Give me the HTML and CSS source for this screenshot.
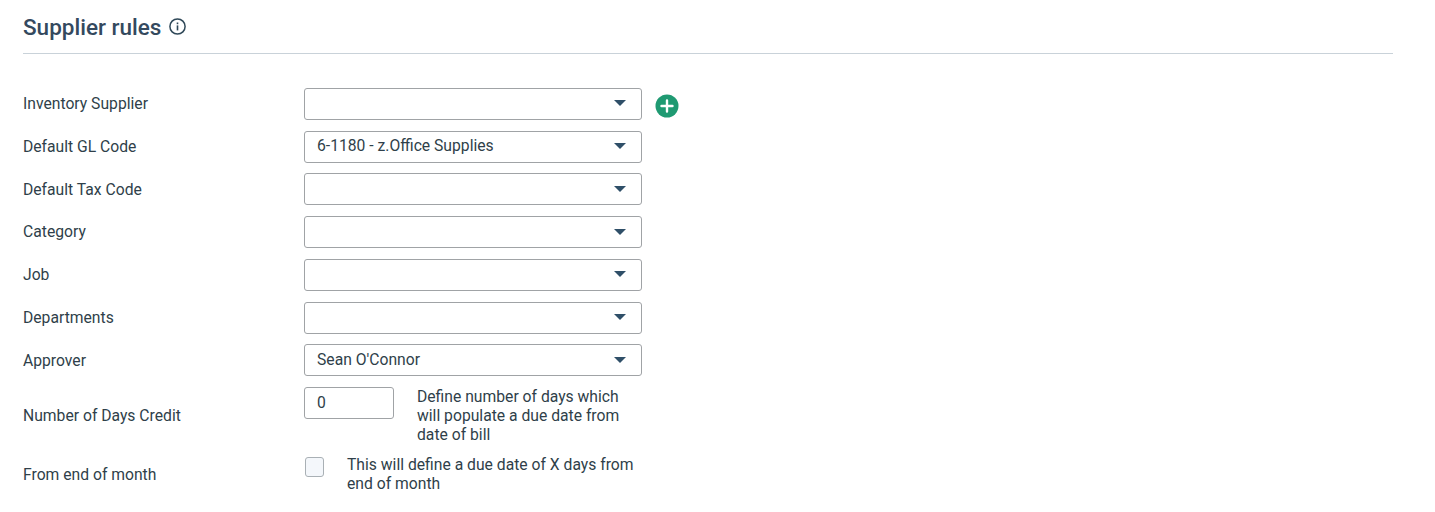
FILE: index.html
```html
<!DOCTYPE html>
<html lang="en">
<head>
<meta charset="utf-8">
<title>Supplier rules</title>
<link rel="stylesheet" href="styles.css">
</head>
<body>
<section class="panel">
  <header class="head">
    <h2 class="title">Supplier rules</h2>
    <svg class="info" width="17" height="17" viewBox="0 0 17 17" aria-hidden="true"><circle cx="8.5" cy="8.5" r="7.6" fill="none" stroke="#2f4858" stroke-width="1.5"/><rect x="7.7" y="7.4" width="1.6" height="5" fill="#2f4858"/><rect x="7.7" y="4.5" width="1.6" height="1.7" fill="#2f4858"/></svg>
  </header>
  <div class="form">
    <div class="row"><label class="label">Inventory Supplier</label><div class="select"><span class="value"></span><i class="caret"></i></div>
      <svg class="add" width="24" height="24" viewBox="0 0 24 24" aria-hidden="true"><circle cx="12" cy="12" r="11.5" fill="#1f9a72"/><path d="M12 6.5v11M6.5 12h11" stroke="#fff" stroke-width="2.4" stroke-linecap="round"/></svg></div>
    <div class="row"><label class="label">Default GL Code</label><div class="select"><span class="value">6-1180 - z.Office Supplies</span><i class="caret"></i></div></div>
    <div class="row"><label class="label">Default Tax Code</label><div class="select"><span class="value"></span><i class="caret"></i></div></div>
    <div class="row"><label class="label">Category</label><div class="select"><span class="value"></span><i class="caret"></i></div></div>
    <div class="row"><label class="label">Job</label><div class="select"><span class="value"></span><i class="caret"></i></div></div>
    <div class="row"><label class="label">Departments</label><div class="select"><span class="value"></span><i class="caret"></i></div></div>
    <div class="row"><label class="label">Approver</label><div class="select"><span class="value">Sean O'Connor</span><i class="caret"></i></div></div>
    <div class="row row-days"><label class="label">Number of Days Credit</label><div class="number">0</div><p class="hint hint-days">Define number of days which will populate a due date from date of bill</p></div>
    <div class="row row-month"><label class="label">From end of month</label><span class="check"></span><p class="hint hint-month">This will define a due date of X days from end of month</p></div>
  </div>
</section>
</body>
</html>
```
FILE: styles.css
```css
* { box-sizing: border-box; }
html, body { margin: 0; background: #fff; }
body { font-family: Roboto, "Liberation Sans", sans-serif; font-size: 15.7px; color: #2f3f4a; overflow: hidden; height: 512px; }
.panel { width: 1393px; padding-left: 23px; }
.head { display: flex; align-items: center; gap: 8px; height: 54px; border-bottom: 1px solid #c9d2d9; }
.title { margin: 0; font-size: 22.5px; font-weight: 500; color: #34495e; }
.info { display: block; }
.form { padding-top: 28.525px; }
.row { display: flex; align-items: center; height: 42.75px; }
.label { width: 281px; flex: none; line-height: 18px; margin-top: 0.4px; }
.select { width: 338px; height: 32px; flex: none; display: flex; align-items: center; justify-content: space-between; padding: 0 15px 0 12px; border: 1px solid #a0a3a6; border-radius: 3px; background: #fff; }
.value { margin-top: -2px; }
.caret { display: block; width: 0; height: 0; margin-top: -1px; border-left: 6px solid transparent; border-right: 6px solid transparent; border-top: 6px solid #2f4f68; }
.add { margin: 4px 0 0 13px; flex: none; }
.row-days { height: 58px; align-items: flex-start; margin-top: 5px; }
.row-days .label { align-self: center; }
.number { width: 90px; height: 32px; flex: none; padding: 0 12px; line-height: 30px; border: 1px solid #a0a3a6; border-radius: 3px; }
.hint { margin: 0; line-height: 19px; }
.hint-days { width: 225px; margin-left: 23px; }
.row-month { height: 38px; margin-top: 11.3px; align-items: flex-start; }
.row-month .label { align-self: center; }
.check { width: 19px; height: 20px; flex: none; margin: 1px 0 0 1px; border: 1px solid #a9b0b5; border-radius: 3px; background: #f4f7fb; }
.hint-month { width: 300px; margin: -1px 0 0 23px; }
```
